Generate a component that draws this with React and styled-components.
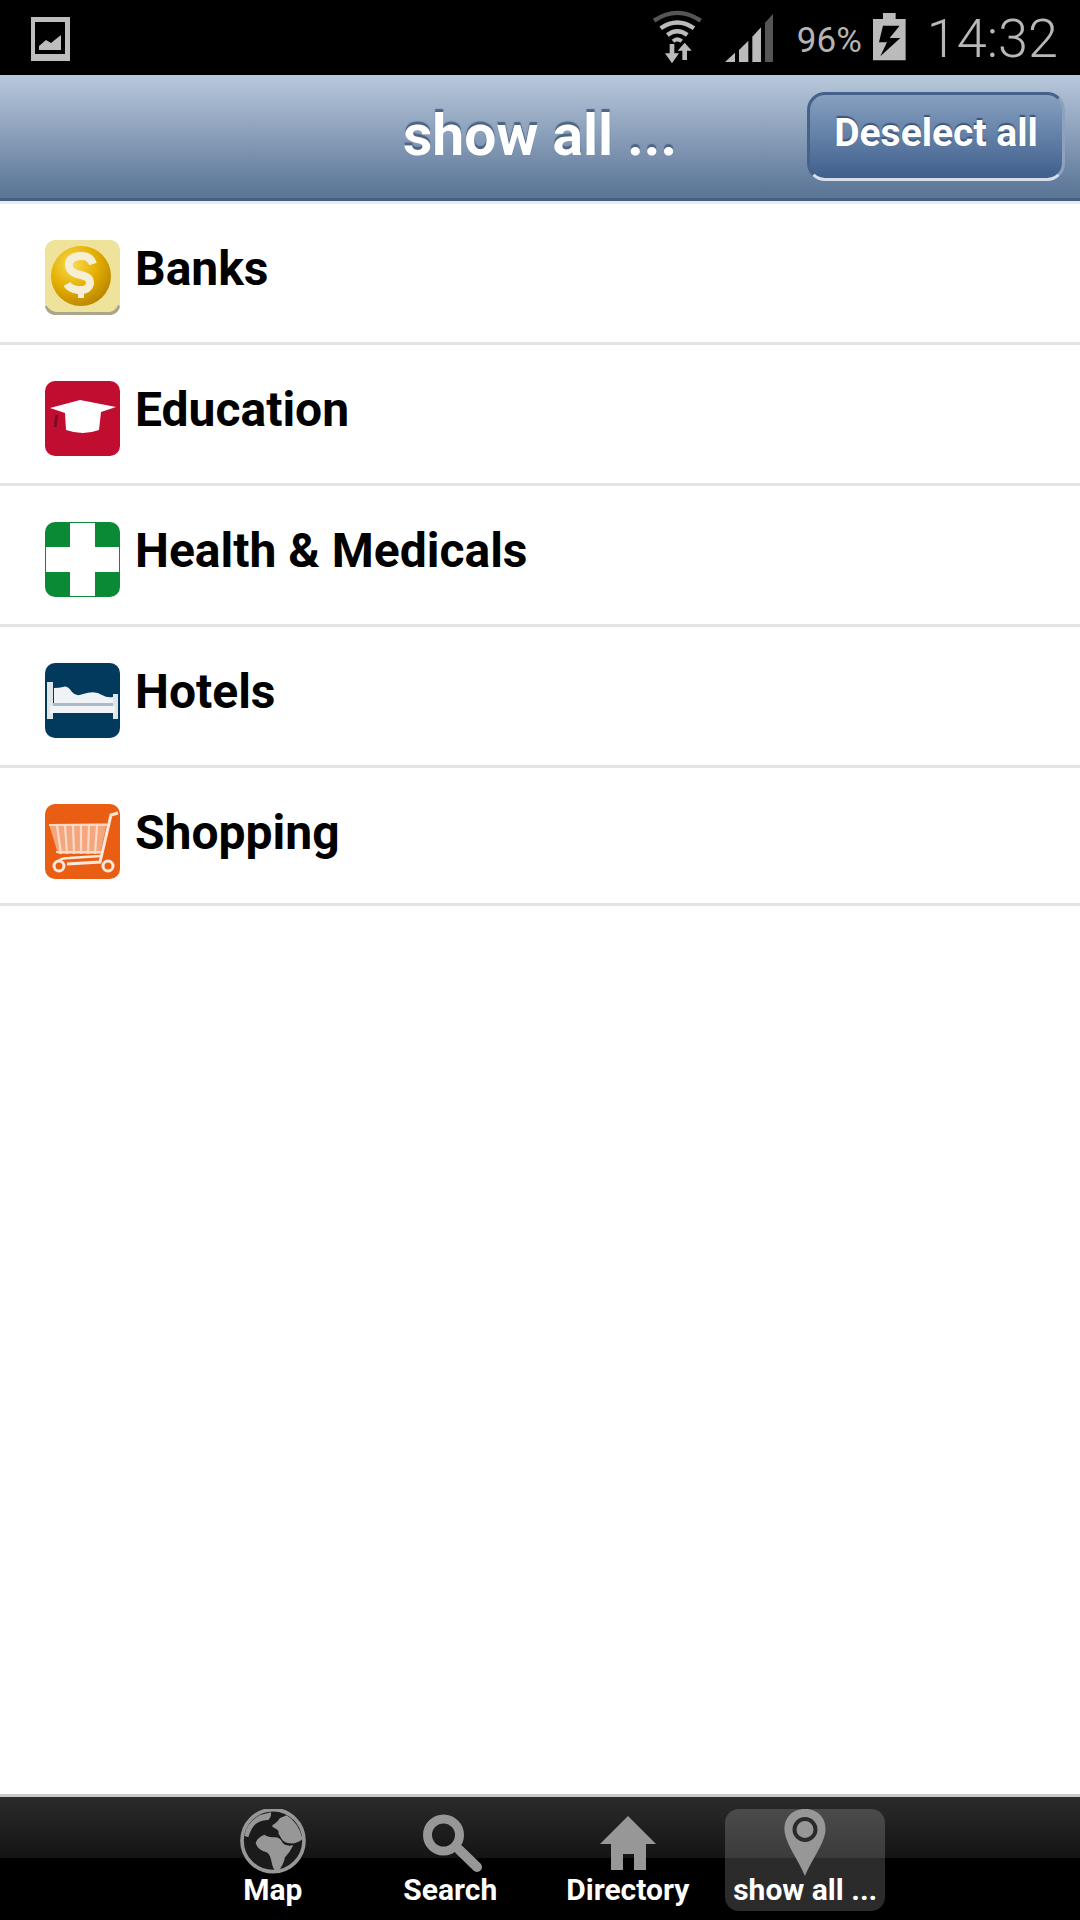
import React from "react";
import styled, { createGlobalStyle } from "styled-components";

const Global = createGlobalStyle`
  html, body { margin: 0; padding: 0; background: #fff; }
  body { font-family: Roboto, "Liberation Sans", sans-serif; }
  * { box-sizing: border-box; }
`;
const Page = styled.div`
  width: 1080px; height: 1920px; display: flex; flex-direction: column; overflow: hidden; background: #fff;
`;
const StatusBar = styled.div`
  height: 75px; flex: none; background: #000; display: flex; align-items: center; padding: 0 22px 0 31px; color: #bdbdbd;
`;
const Notif = styled.svg`
  display: block; width: 39px; height: 44px; margin-top: 3px; margin-right: auto;
`;
const StatusIcon = styled.svg`
  display: block; flex: none; margin-left: ${p => p.$ml}px; margin-top: ${p => p.$mt || 0}px;
`;
const Percent = styled.span`
  font-size: 35px; font-weight: 400; margin-left: 23.5px; margin-top: 6px; color: #b4b4b4; line-height: 1;
`;
const Clock = styled.span`
  font-size: 54px; font-weight: 300; margin-left: 21px; margin-top: 2px; color: #b8b8b8; line-height: 1;
`;
const Header = styled.header`
  height: 126px; flex: none; display: grid; grid-template-columns: 1fr auto 1fr; align-items: center; padding: 0 15px;
  background: linear-gradient(#b9c9dc, #5c7698 96%);
  border-bottom: 3px solid #446184;
  box-shadow: 0 3px 0 #e6ebf2;
  position: relative;
`;
const Title = styled.h1`
  grid-column: 2; margin: 0 0 3px; font-size: 57px; font-weight: 700; color: #fff; line-height: 1; white-space: nowrap;
  text-shadow: 0 -3px 1px #4d6484;
`;
const Deselect = styled.button`
  grid-column: 3; justify-self: end; width: 258px; height: 89px; padding: 0 0 7px; border-radius: 18px;
  border: 3px solid #46618a; border-bottom-color: #d5deea; border-right-color: #8da2bf;
  background: linear-gradient(#86a0c0, #3f5f8c);
  color: #fff; font-family: inherit; font-size: 39px; font-weight: 700; text-shadow: 0 -2px 1px #3c5478;
`;
const List = styled.ul`
  list-style: none; margin: 3px 0 0; padding: 0; flex: 1;
`;
const Row = styled.li`
  height: ${p => p.$h || 141}px; display: flex; align-items: flex-start; padding: 36px 0 0 45px; border-bottom: 3px solid #e4e4e4; gap: 15px;
`;
const IconBox = styled.svg`
  display: block; flex: none; width: 75px; height: 75px; filter: blur(0.5px);
`;
const Label = styled.span`
  font-size: 48px; font-weight: 700; color: #000; line-height: 56px; margin-top: 1px;
`;
const TabBar = styled.nav`
  height: 126px; flex: none; display: flex; justify-content: center; gap: 17.5px; padding: 12px 2px 9px 0;
  border-top: 3px solid #c8c8c8;
  background: linear-gradient(#2b2b2b, #141414 61px, #000 61px);
`;
const Tab = styled.div`
  width: 160px; display: flex; flex-direction: column; align-items: center; border-radius: 14px;
  background: ${p => (p.$active ? "rgba(255,255,255,0.17)" : "transparent")};
`;
const TabIcon = styled.svg`
  display: block; width: 76px; height: 68px; flex: none;
`;
const TabLabel = styled.span`
  font-size: 30px; font-weight: 700; color: #fff; line-height: 30px; white-space: nowrap; margin-top: -2px;
`;

const Wifi = () => (
  <StatusIcon $ml={0} $mt={-1} width="51" height="56" viewBox="0 0 51 56">
    <g transform="translate(-13 -9) scale(0.3333)">
      <g fill="none">
        <path d="M45 62 Q115 15 185 62" stroke="#555" strokeWidth="13" />
        <path d="M65 85 Q115 50 165 85" stroke="#bbb" strokeWidth="13" />
        <path d="M85 105 Q115 82 145 105" stroke="#bbb" strokeWidth="13" />
        <path d="M102 124 Q115 112 128 124" stroke="#bbb" strokeWidth="12" />
      </g>
      <path d="M92 132 h14 v28 h14 L99 190 L78 160 h14z" fill="#bbb" />
      <path d="M130 180 V152 h-14 L137 128 L158 152 h-14 v28z" fill="#bbb" />
    </g>
  </StatusIcon>
);
const Signal = () => (
  <StatusIcon $ml={22} $mt={1} width="48" height="48" viewBox="0 0 48 48">
    <g transform="translate(-86 -14) scale(0.3333)">
      <path d="M258 186 L288 158 V186Z" fill="#bbb" />
      <path d="M300 186 V150 L328 122 V186Z" fill="#bbb" />
      <path d="M340 186 V110 L366 82 V186Z" fill="#bbb" />
      <path d="M378 186 V68 L402 42 V186Z" fill="#555" />
    </g>
  </StatusIcon>
);
const Battery = () => (
  <StatusIcon $ml={11} $mt={-1} width="33" height="48" viewBox="0 0 33 48">
    <g transform="translate(-233.33 -13.33) scale(0.3333)">
      <path d="M730 40 H768 V58 H798 V182 H700 V58 H730z" fill="#bbb" />
      <path d="M730 78 H780 L750 115 H782 L722 170 L742 128 H718 Z" fill="#000" />
    </g>
  </StatusIcon>
);

const BankIcon = () => (
  <IconBox viewBox="0 0 75 75">
    <defs>
      <radialGradient id="coin" cx="0.36" cy="0.3" r="0.75">
        <stop offset="0" stopColor="#f8dc50" /><stop offset="0.55" stopColor="#e4ae00" /><stop offset="1" stopColor="#b98400" />
      </radialGradient>
    </defs>
    <rect width="75" height="75" rx="10" fill="#efe29a" />
    <path d="M0 66 a10 10 0 0 0 9 9 h57 a10 10 0 0 0 9 -9 l-2 -1 q-3 6 -8 7 H11 q-6 -1 -9 -6z" fill="#a9a68a" />
    <circle cx="36" cy="36" r="30" fill="url(#coin)" />
    <path d="M48 24 Q45 15 35 16 Q23 17 24 26 Q25 33 36 35 Q46 37 45 44 Q43 51 33 50 Q25 49 22 44" fill="none" stroke="#f6efd6" strokeWidth="8" />
    <path d="M36 50 V58" stroke="#f6efd6" strokeWidth="6" />
  </IconBox>
);
const EduIcon = () => (
  <IconBox viewBox="0 0 75 75">
    <rect width="75" height="75" rx="10" fill="#c10d30" />
    <path d="M5 27 L35 19 L71 26 L56 31 L54 49 Q38 55 21 49 L20 32z" fill="#fff" />
    <path d="M12 34 L10 46" stroke="#7c0e22" strokeWidth="3" />
  </IconBox>
);
const HealthIcon = () => (
  <IconBox viewBox="0 0 75 75">
    <rect width="75" height="75" rx="10" fill="#0b8a36" />
    <path d="M25 1 H50 V25 H74 V50 H50 V74 H25 V50 H1 V25 H25z" fill="#fff" />
  </IconBox>
);
const HotelIcon = () => (
  <IconBox viewBox="0 0 75 75">
    <rect width="75" height="75" rx="10" fill="#023a5e" />
    <rect x="2" y="19" width="6" height="37" fill="#dfe6ea" />
    <rect x="68" y="31" width="5" height="25" fill="#dfe6ea" />
    <rect x="5" y="43" width="65" height="7" fill="#f1f4f6" />
    <path d="M9 25 Q14 25 18 24 Q22 22 27 29 Q31 34 38 31 Q50 27 57 32 Q62 35 68 34 V40 H9z" fill="#f0f3f5" />
    <path d="M8 40 H68 V43 H8z" fill="#a9bcc8" />
  </IconBox>
);
const ShopIcon = () => (
  <IconBox viewBox="0 0 75 75">
    <rect width="75" height="75" rx="10" fill="#ea5e14" />
    <path d="M4 20 L62 19 L55 50 L13 50z" fill="#fbe2d4" opacity="0.55" />
    <g fill="none" stroke="#fbd9c6" strokeWidth="2.2">
      <path d="M4 21 L62 21 M11 48 L56 48" />
      <path d="M12 21 L16 50 M20 21 L22 50 M28 21 L29 50 M36 21 L36 50 M44 21 L43 50 M52 21 L50 50" />
    </g>
    <path d="M73 9 L66 11 L55 58 L22 60" fill="none" stroke="#fde9dd" strokeWidth="3" />
    <circle cx="14" cy="62" r="5" fill="none" stroke="#fde9dd" strokeWidth="3" />
    <circle cx="63" cy="62" r="5" fill="none" stroke="#fde9dd" strokeWidth="3" />
    <path d="M14 57 Q16 54 24 54 L56 52" fill="none" stroke="#fde9dd" strokeWidth="2.5" />
  </IconBox>
);

const Globe = () => (
  <TabIcon viewBox="0 0 76 68">
    <g transform="translate(0 -5) scale(0.3333)" fill="#979797">
      <circle cx="114" cy="110" r="93" fill="#1b1b1b" stroke="#979797" strokeWidth="11" />
      <path d="M28 95 Q35 55 75 33 L108 25 Q110 40 100 48 Q78 48 62 60 Q48 72 40 100 Z" />
      <path d="M155 34 Q190 55 203 105 Q185 120 165 118 Q150 118 140 105 L130 88 Q135 80 118 72 Q105 66 118 60 Q130 52 135 42 Z" />
      <path d="M62 118 Q65 102 88 92 Q100 100 120 100 Q135 100 142 115 Q150 128 175 124 Q165 145 150 160 Q145 185 130 200 Q115 205 110 175 Q105 150 95 145 Q70 140 62 118Z" />
    </g>
  </TabIcon>
);
const Search = () => (
  <TabIcon viewBox="0 0 76 68">
    <circle cx="31.5" cy="26" r="16" fill="none" stroke="#979797" strokeWidth="9" />
    <path d="M47.5 41 L65 58" stroke="#979797" strokeWidth="10" strokeLinecap="round" />
  </TabIcon>
);
const Home = () => (
  <TabIcon viewBox="0 0 76 68">
    <path d="M38 7 L66 35 H56 V61 H44 V45 H33 V61 H21 V35 H10z" fill="#979797" />
  </TabIcon>
);
const Pin = () => (
  <TabIcon viewBox="0 0 76 68">
    <path d="M38 0 C24 0 17 10 17.5 21 C18 34 32 52 38 67 C44 52 58 34 58.5 21 C59 10 52 0 38 0z" fill="#979797" />
    <circle cx="38" cy="20.5" r="10.5" fill="#979797" stroke="#2a2a2a" strokeWidth="4" />
  </TabIcon>
);

const rows = [
  ["Banks", BankIcon, 141],
  ["Education", EduIcon, 141],
  ["Health & Medicals", HealthIcon, 141],
  ["Hotels", HotelIcon, 141],
  ["Shopping", ShopIcon, 138],
];
const tabs = [["Map", Globe], ["Search", Search], ["Directory", Home], ["show all ...", Pin, true]];

export default function App() {
  return (
    <Page>
      <Global />
      <StatusBar>
        <Notif viewBox="0 0 39 44">
          <path fillRule="evenodd" d="M0 0H39V44H0z M4 5V37H34V5z" fill="#bdbdbd" />
          <path d="M8 33 V29 L15 23 L20 26 L30 18 V33z" fill="#bdbdbd" />
        </Notif>
        <Wifi />
        <Signal />
        <Percent>96%</Percent>
        <Battery />
        <Clock>14:32</Clock>
      </StatusBar>
      <Header>
        <Title>show all ...</Title>
        <Deselect>Deselect all</Deselect>
      </Header>
      <List>
        {rows.map(([name, Icon, h]) => (
          <Row key={name} $h={h}><Icon /><Label>{name}</Label></Row>
        ))}
      </List>
      <TabBar>
        {tabs.map(([name, Icon, active]) => (
          <Tab key={name} $active={active}><Icon /><TabLabel>{name}</TabLabel></Tab>
        ))}
      </TabBar>
    </Page>
  );
}
